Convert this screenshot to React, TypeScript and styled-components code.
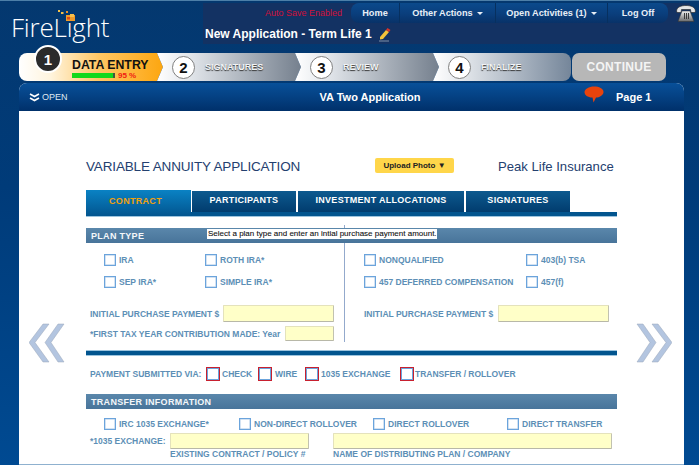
import React from "react";
import styled, { createGlobalStyle } from "styled-components";

const Global = createGlobalStyle`
  html, body { margin: 0; padding: 0; background: #003a78; }
  * { box-sizing: border-box; }
`;

const Page = styled.div`
  width: 699px; height: 465px; overflow: hidden; position: relative;
  background: linear-gradient(180deg, #04386f 0%, #003b79 40%, #004a92 100%);
  border-top: 1px solid #4d7fa8;
  font-family: "Liberation Sans", Arial, sans-serif;
`;
const Header = styled.header`
  display: flex; height: 52px;
`;
const LogoBox = styled.div`
  width: 203px; padding: 3px 0 0 11px; position: relative; flex: none;
`;
const LogoText = styled.div`
  font-family: "Open Sans", sans-serif; font-weight: 300; font-size: 26px; line-height: 36px;
  color: #fff; letter-spacing: -0.2px; margin-top: 5px;
`;
const LogoSpark = styled.svg`
  position: absolute; left: 58px; top: 8px;
`;
const TopPanel = styled.div`
  width: 487px; height: 41px; margin-top: 2px; background: #133263; flex: none;
  display: flex; flex-direction: column;
`;
const TopRow = styled.div`display: flex; align-items: center; height: 20px;`;
const AutoSave = styled.div`
  width: 148px; padding-left: 62px; font-size: 9px; color: #d0103a; white-space: nowrap; flex: none;
`;
const Nav = styled.nav`
  display: flex; height: 20px; width: 317px; border-radius: 8px; flex: none;
  background: linear-gradient(180deg, #0b4a8c 0%, #0a3e7c 55%, #083268 100%);
`;
const NavItem = styled.div<{ $w: number; $last?: boolean }>`
  width: ${(p) => p.$w}px; display: flex; align-items: center; justify-content: center;
  color: #e8eef6; font-size: 9.2px; font-weight: 700; white-space: nowrap;
  border-right: ${(p) => (p.$last ? "none" : "1px solid #07305f")};
`;
const Caret = styled.span`
  display: inline-block; width: 0; height: 0; margin-left: 4px;
  border-left: 3px solid transparent; border-right: 3px solid transparent; border-top: 3px solid #e8eef6;
`;
const Phone = styled.svg`margin-left: 8px; flex: none; margin-top: 1px;`;
const AppTitle = styled.div`
  display: flex; align-items: center; height: 21px; padding: 1px 0 0 2px;
  color: #fff; font-size: 12px; font-weight: 700; white-space: nowrap; gap: 6px;
`;
const Stepper = styled.div`
  display: flex; height: 29px; margin-left: 19px; position: relative;
`;
const Step = styled.div<{ $w: number; $first?: boolean; $end?: string; $last?: boolean }>`
  width: ${(p) => p.$w}px; height: 28px; flex: none; margin-left: ${(p) => (p.$first ? 0 : -6)}px;
  background: linear-gradient(90deg, #fff 0%, #dfe3e8 25%, ${(p) => p.$end} 100%);
  display: flex; align-items: center;
  padding-left: 15px;
  clip-path: ${(p) =>
    p.$first
      ? "polygon(0 0, calc(100% - 6px) 0, 100% 50%, calc(100% - 6px) 100%, 0 100%)"
      : p.$last
      ? "polygon(0 0, 100% 0, 100% 100%, 0 100%, 6px 50%)"
      : "polygon(0 0, calc(100% - 6px) 0, 100% 50%, calc(100% - 6px) 100%, 0 100%, 6px 50%)"};
  border-radius: ${(p) => (p.$first ? "8px 0 0 8px" : p.$last ? "0 8px 8px 0" : "0")};
`;
const ActiveStep = styled(Step)`
  background: linear-gradient(90deg, #fff 0%, #fff4dd 22%, #ffc766 55%, #fda60f 100%);
  padding-left: 53px; display: block;
`;
const ActiveName = styled.div`
  font-size: 12.3px; font-weight: 700; color: #111; line-height: 12px; margin-top: 6px; white-space: nowrap;
`;
const ProgressRow = styled.div`display: flex; align-items: center; gap: 3px; height: 9px;`;
const Progress = styled.div`
  width: 43px; height: 5px; background: #12d81c; border-right: 2px solid #3e5a3e;
`;
const Percent = styled.span`font-size: 8px; font-weight: 700; color: #f01c10;`;
const StepOneBadge = styled.div`
  position: absolute; left: 15px; top: -8px; width: 28px; height: 28px; border-radius: 50%;
  background: #2b2b2b; border: 2px solid #fff; color: #fff; font-size: 15px; font-weight: 700;
  display: flex; align-items: center; justify-content: center;
`;
const StepCircle = styled.div`
  width: 23px; height: 23px; border-radius: 50%; background: #fff; border: 1.5px solid #7f7f7f;
  color: #111; font-size: 15px; font-weight: 700; flex: none;
  display: flex; align-items: center; justify-content: center;
`;
const StepName = styled.div`
  margin-left: 10px; color: #f2f4f6; font-size: 9px; font-weight: 700; text-shadow: 0 1px 1px #333; white-space: nowrap;
`;
const Continue = styled.div`
  width: 94px; height: 28px; margin-left: 1px; flex: none; background: #b7b7b7; border-radius: 7px;
  color: #f4f4f4; font-size: 12px; font-weight: 700; letter-spacing: .3px;
  display: flex; align-items: center; justify-content: center;
`;
const Sheet = styled.main`
  width: 665px; margin-left: 19px; margin-top: 1px; border-bottom: 1px solid #8fb1cf;
  height: 382px; background: #fff; border-radius: 8px 8px 0 0; overflow: hidden;
`;
const TitleBar = styled.div`
  height: 28px; display: flex; align-items: center; position: relative;
  background: linear-gradient(180deg, #085099 0%, #043f80 55%, #00306a 100%);
  color: #fff;
`;
const OpenToggle = styled.div`
  width: 150px; display: flex; align-items: center; gap: 2px; padding-left: 10px;
  font-size: 9px; color: #dfe8f2; flex: none;
`;
const BarTitle = styled.div`
  width: 402px; text-align: center; font-size: 11px; font-weight: 700; flex: none;
`;
const Bubble = styled.svg`margin-left: 13px; flex: none; margin-top: -5px;`;
const PageNo = styled.div`font-size: 11px; font-weight: 700; margin-left: 12px; white-space: nowrap;`;
const Body = styled.div`
  display: grid; grid-template-columns: 67px 531px 67px;
`;
const ArrowCell = styled.div<{ $right?: boolean }>`
  padding-top: 212px; display: flex; justify-content: ${(p) => (p.$right ? "flex-start" : "flex-end")};
  padding-left: ${(p) => (p.$right ? 19 : 0)}px; padding-right: ${(p) => (p.$right ? 0 : 21)}px;
`;
const Form = styled.div`padding-top: 44px;`;
const DocHead = styled.div`
  display: flex; align-items: center; height: 23px; color: #24406f;
`;
const DocTitle = styled.div`width: 289px; font-size: 13.5px; white-space: nowrap; letter-spacing: -.15px; flex: none;`;
const Upload = styled.div`
  width: 79px; height: 15px; border-radius: 2px; background: #ffd64a; color: #222; font-size: 8px; font-weight: 700;
  display: flex; align-items: center; justify-content: center; flex: none; margin-top: -3px;
`;
const Insurer = styled.div`margin-left: 44px; font-size: 13.1px; white-space: nowrap;`;
const Tabs = styled.div`
  display: flex; align-items: flex-start; height: 26px; margin-top: 12px; gap: 2px;
  border-bottom: 4px solid #02558f; box-shadow: 0 1px 0 #9cc4de;
`;
const Tab = styled.div<{ $w: number; $active?: boolean }>`
  width: ${(p) => p.$w}px; height: ${(p) => (p.$active ? 26 : 21)}px; margin-top: ${(p) => (p.$active ? 0 : 1)}px;
  margin-right: ${(p) => (p.$active ? -1 : 0)}px;
  flex: none; display: flex; align-items: center; justify-content: center;
  font-size: 9px; font-weight: 700; letter-spacing: .3px;
  color: ${(p) => (p.$active ? "#f2a10c" : "#fff")};
  background: ${(p) =>
    p.$active ? "linear-gradient(180deg, #0a82c4 0%, #02558f 100%)" : "linear-gradient(180deg, #0d5a8f 0%, #013c6e 100%)"};
  padding: ${(p) => (p.$active ? "0 6px 4px 0" : "0 0 4px 0")};
`;
const SectionBar = styled.div<{ $mt: number; $h: number }>`
  height: ${(p) => p.$h}px; margin-top: ${(p) => p.$mt}px; padding-left: 5px;
  display: flex; align-items: center;
  background: linear-gradient(180deg, #5a87ab 0%, #48749a 100%);
  color: #f4f7fa; font-size: 9px; font-weight: 700; letter-spacing: .3px;
`;
const SectionName = styled.span`width: 116px; flex: none; white-space: nowrap;`;
const Hint = styled.span`
  width: 230px; height: 10px; margin-top: -4px; background: #fff; color: #111; letter-spacing: 0;
  font-size: 8px; font-weight: 400; line-height: 10px; white-space: nowrap; -webkit-text-stroke: .1px #111; padding-left: 1px;
`;
const PlanGrid = styled.div`display: grid; grid-template-columns: 259px 1fr; height: 99px;`;
const PlanCol = styled.div<{ $left?: boolean }>`
  position: relative; padding-left: ${(p) => (p.$left ? 4 : 19)}px;
  border-right: ${(p) => (p.$left ? "1px solid #93a9cc" : "none")};
  &::before {
    content: ${(p) => (p.$left ? '""' : "none")};
    position: absolute; right: -1px; top: -18px; height: 3px; width: 1px; background: #93a9cc;
  }
`;
const CheckGrid = styled.div<{ $cols: string }>`
  display: grid; grid-template-columns: ${(p) => p.$cols}; row-gap: 9px; padding-top: 10px; height: 62px; align-content: start;
`;
const Opt = styled.div<{ $pl?: number }>`
  display: flex; align-items: center; gap: 3px; height: 13px; padding-left: ${(p) => p.$pl ?? 0}px; white-space: nowrap;
`;
const Box = styled.span<{ $red?: boolean }>`
  width: 12px; height: 12px; flex: none; background: #fff; border: 1px solid #6ba4dc;
  box-shadow: ${(p) => (p.$red ? "0 0 0 1px #c8202f" : "inset 0 0 0 .5px #a8c6e6")};
`;
const Label = styled.span`
  font-size: 8.5px; font-weight: 700; color: #5d8fb6; white-space: nowrap;
`;
const FieldLabel = styled(Label)<{ $w: number }>`
  width: ${(p) => p.$w}px; flex: none; display: block;
`;
const FieldRow = styled.div<{ $mt?: number; $pl?: number }>`
  display: flex; align-items: center; margin-top: ${(p) => p.$mt ?? 0}px; padding-left: ${(p) => p.$pl ?? 0}px;
`;
const Input = styled.div<{ $w: number; $h?: number; $ml?: number }>`
  width: ${(p) => p.$w}px; height: ${(p) => p.$h ?? 16}px; margin-left: ${(p) => p.$ml ?? 0}px; flex: none;
  background: #ffffc8; border: 1px solid #e4e2bc; border-right-color: #c2c2b0; border-bottom-color: #b8b8a8; border-radius: 1px;
`;
const Rule = styled.div`
  height: 4px; margin-top: 9px; background: #02558f; box-shadow: 0 1px 0 #9cc4de, 0 -1px 0 #9cc4de;
`;
const PayRow = styled.div`
  display: flex; align-items: center; height: 14px; margin-top: 12px; padding-left: 4px;
`;
const PayOpt = styled.div<{ $w: number; $gap: number }>`
  width: ${(p) => p.$w}px; display: flex; align-items: center; gap: ${(p) => p.$gap}px; flex: none;
`;
const TransferRow = styled.div`display: grid; grid-template-columns: 18px 135px 134px 134px 1fr; height: 13px; margin-top: 8px;`;
const SubLabels = styled.div`display: flex; padding-left: 84px; gap: 24px;`;
const SubLabel = styled.div<{ $w: number }>`width: ${(p) => p.$w}px; flex: none; font-size: 8.5px; line-height: 10px;`;

const Chevrons = ({ flip }: { flip?: boolean }) => (
  <svg width="36" height="40" viewBox="0 0 36 40" style={flip ? { transform: "scaleX(-1)" } : undefined}>
    <g fill="#b3c5e0" stroke="#9aa6b8" strokeWidth="0.5">
      <path d="M14 1h6L6 19.500 20 39h-6L0 19.500z" />
      <path d="M29 1h6L22 19.500 35 39h-6L16 19.500z" />
    </g>
  </svg>
);

const Check = ({ t, red, pl }: { t: string; red?: boolean; pl?: number }) => (
  <Opt $pl={pl}>
    <Box $red={red} />
    <Label>{t}</Label>
  </Opt>
);

export default function App() {
  return (
    <Page>
      <Global />
      <Header>
        <LogoBox>
          <LogoSpark width="18" height="14" viewBox="0 0 18 14">
            <rect x="0" y="1" width="2" height="2" fill="#f4c04a" />
            <rect x="3" y="3" width="2.500" height="2" fill="#f6c04a" />
            <rect x="8" y="2" width="2" height="2" fill="#e8912a" />
            <rect x="8" y="6" width="9" height="6" fill="#f09a28" />
            <rect x="12" y="5" width="4" height="3" fill="#f7c04c" />
            <rect x="9" y="8" width="3" height="2.500" fill="#d94b1a" />
          </LogoSpark>
          <LogoText>FireLight</LogoText>
        </LogoBox>
        <TopPanel>
          <TopRow>
            <AutoSave>Auto Save Enabled</AutoSave>
            <Nav>
              <NavItem $w={49}>Home</NavItem>
              <NavItem $w={96}>Other Actions<Caret /></NavItem>
              <NavItem $w={112}>Open Activities (1)<Caret /></NavItem>
              <NavItem $w={60} $last>Log Off</NavItem>
            </Nav>
            <Phone width="20" height="20" viewBox="0 0 20 20">
              <defs>
                <linearGradient id="phoneBase" x1="0" y1="0" x2="0" y2="1">
                  <stop offset="0" stopColor="#f2f2f2" />
                  <stop offset="1" stopColor="#6a6a6a" />
                </linearGradient>
              </defs>
              <path d="M.5 7C1 3 5 1.500 10 1.500S19 3 19.500 7l-.5 1.500h-4L14.500 5.500h-9L5 8.500H1z" fill="#e4e4e4" stroke="#222" strokeWidth=".6" />
              <path d="M6 7h8l4 10.500H2z" fill="url(#phoneBase)" stroke="#333" strokeWidth=".5" />
              <path d="M8 9h1v6H8zM10 9h1v6h-1zM12 9h1v6h-1z" fill="#3a3a3a" />
            </Phone>
          </TopRow>
          <AppTitle>
            New Application - Term Life 1
            <svg width="13" height="15" viewBox="0 0 13 15">
              <path d="M2 10 8 3l3 2-6 7-3 .500z" fill="#f3c33a" />
              <path d="M8 3l1.500-2 3 2-1.500 2z" fill="#d8342a" />
              <path d="M1 14h10" stroke="#7f8fa8" strokeWidth="1" />
            </svg>
          </AppTitle>
        </TopPanel>
      </Header>
      <Stepper>
        <ActiveStep $w={144} $first $end="#fda60f">
          <ActiveName>DATA ENTRY</ActiveName>
          <ProgressRow><Progress /><Percent>95 %</Percent></ProgressRow>
        </ActiveStep>
        <StepOneBadge>1</StepOneBadge>
        <Step $w={144} $end="#75808e"><StepCircle>2</StepCircle><StepName>SIGNATURES</StepName></Step>
        <Step $w={144} $end="#75808e"><StepCircle>3</StepCircle><StepName>REVIEW</StepName></Step>
        <Step $w={138} $last $end="#75869a"><StepCircle>4</StepCircle><StepName>FINALIZE</StepName></Step>
        <Continue>CONTINUE</Continue>
      </Stepper>
      <Sheet>
        <TitleBar>
          <OpenToggle>
            <svg width="11" height="9" viewBox="0 0 11 9">
              <path d="M1 1l4.500 2.500L10 1M1 5l4.500 2.500L10 5" fill="none" stroke="#fff" strokeWidth="1.6" />
            </svg>
            OPEN
          </OpenToggle>
          <BarTitle>VA Two Application</BarTitle>
          <Bubble width="20" height="17" viewBox="0 0 20 17">
            <path d="M10 .5c5 0 9.500 2 9.500 5.500S15 11.500 12 11.500L9.500 16.500 8.500 11.500C3.500 11.500.5 9 .5 6S5 .5 10 .5z" fill="#e8430c" />
          </Bubble>
          <PageNo>Page 1</PageNo>
        </TitleBar>
        <Body>
          <ArrowCell><Chevrons /></ArrowCell>
          <Form>
            <DocHead>
              <DocTitle>VARIABLE ANNUITY APPLICATION</DocTitle>
              <Upload>Upload Photo&nbsp;▼</Upload>
              <Insurer>Peak Life Insurance</Insurer>
            </DocHead>
            <Tabs>
              <Tab $w={105} $active>CONTRACT</Tab>
              <Tab $w={104}>PARTICIPANTS</Tab>
              <Tab $w={166}>INVESTMENT ALLOCATIONS</Tab>
              <Tab $w={104}>SIGNATURES</Tab>
            </Tabs>
            <SectionBar $mt={12} $h={15}>
              <SectionName>PLAN TYPE</SectionName>
              <Hint>Select a plan type and enter an intial purchase payment amount.</Hint>
            </SectionBar>
            <PlanGrid>
              <PlanCol $left>
                <CheckGrid $cols="101px 1fr">
                  <Check t="IRA" pl={14} />
                  <Check t="ROTH IRA*" pl={14} />
                  <Check t="SEP IRA*" pl={14} />
                  <Check t="SIMPLE IRA*" pl={14} />
                </CheckGrid>
                <FieldRow>
                  <FieldLabel $w={133}>INITIAL PURCHASE PAYMENT $</FieldLabel>
                  <Input $w={111} $h={17} />
                </FieldRow>
                <FieldRow $mt={4}>
                  <FieldLabel $w={195}>*FIRST TAX YEAR CONTRIBUTION MADE: Year</FieldLabel>
                  <Input $w={49} $h={15} />
                </FieldRow>
              </PlanCol>
              <PlanCol>
                <CheckGrid $cols="162px 1fr">
                  <Check t="NONQUALIFIED" />
                  <Check t="403(b) TSA" />
                  <Check t="457 DEFERRED COMPENSATION" />
                  <Check t="457(f)" />
                </CheckGrid>
                <FieldRow>
                  <FieldLabel $w={134}>INITIAL PURCHASE PAYMENT $</FieldLabel>
                  <Input $w={111} $h={17} />
                </FieldRow>
              </PlanCol>
            </PlanGrid>
            <Rule />
            <PayRow>
              <PayOpt $w={117} $gap={0}><Label>PAYMENT SUBMITTED VIA:</Label></PayOpt>
              <PayOpt $w={52} $gap={3}><Box $red /><Label>CHECK</Label></PayOpt>
              <PayOpt $w={47} $gap={4}><Box $red /><Label>WIRE</Label></PayOpt>
              <PayOpt $w={95} $gap={3}><Box $red /><Label>1035 EXCHANGE</Label></PayOpt>
              <PayOpt $w={120} $gap={2}><Box $red /><Label>TRANSFER / ROLLOVER</Label></PayOpt>
            </PayRow>
            <SectionBar $mt={13} $h={15}>
              <SectionName>TRANSFER INFORMATION</SectionName>
            </SectionBar>
            <TransferRow>
              <span />
              <Check t="IRC 1035 EXCHANGE*" />
              <Check t="NON-DIRECT ROLLOVER" />
              <Check t="DIRECT ROLLOVER" />
              <Check t="DIRECT TRANSFER" />
            </TransferRow>
            <FieldRow $mt={3} $pl={4}>
              <FieldLabel $w={80}>*1035 EXCHANGE:</FieldLabel>
              <Input $w={139} />
              <Input $w={279} $ml={24} />
            </FieldRow>
            <SubLabels>
              <SubLabel $w={139}><Label>EXISTING CONTRACT / POLICY #</Label></SubLabel>
              <SubLabel $w={279}><Label>NAME OF DISTRIBUTING PLAN / COMPANY</Label></SubLabel>
            </SubLabels>
          </Form>
          <ArrowCell $right><Chevrons flip /></ArrowCell>
        </Body>
      </Sheet>
    </Page>
  );
}
